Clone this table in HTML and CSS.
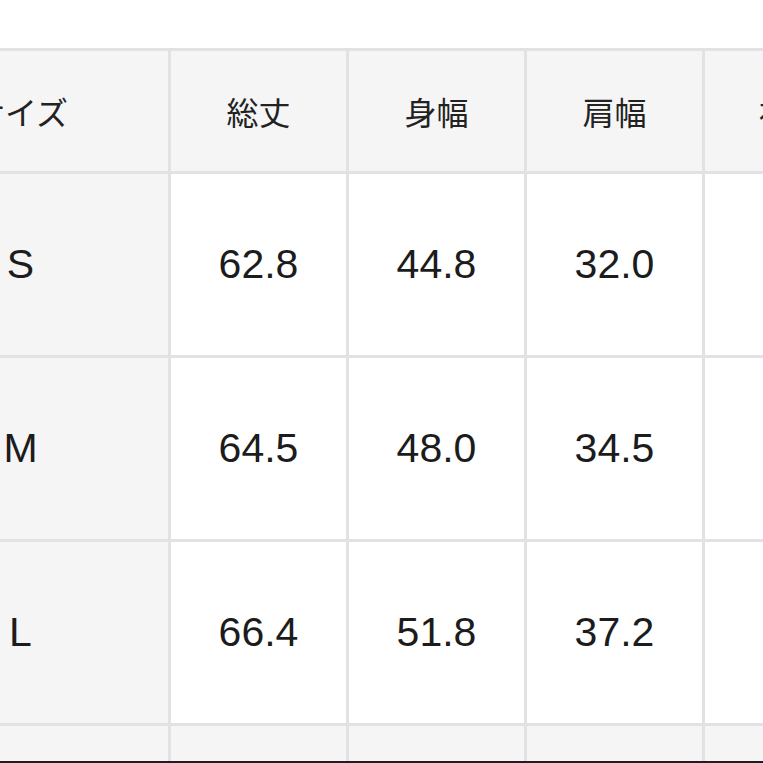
FILE: index.html
```html
<!DOCTYPE html>
<html lang="ja">
<head>
<meta charset="utf-8">
<title>サイズ表</title>
<link rel="stylesheet" href="styles.css">
</head>
<body>
<div class="frame">
  <div class="size-table">
    <div class="cell head">サイズ</div>
    <div class="cell head">総丈</div>
    <div class="cell head">身幅</div>
    <div class="cell head">肩幅</div>
    <div class="cell head">袖口幅</div>

    <div class="cell label">S</div>
    <div class="cell num">62.8</div>
    <div class="cell num">44.8</div>
    <div class="cell num">32.0</div>
    <div class="cell num">58.5</div>

    <div class="cell label">M</div>
    <div class="cell num">64.5</div>
    <div class="cell num">48.0</div>
    <div class="cell num">34.5</div>
    <div class="cell num">60.0</div>

    <div class="cell label">L</div>
    <div class="cell num">66.4</div>
    <div class="cell num">51.8</div>
    <div class="cell num">37.2</div>
    <div class="cell num">61.5</div>

    <div class="cell foot"></div>
    <div class="cell foot"></div>
    <div class="cell foot"></div>
    <div class="cell foot"></div>
    <div class="cell foot"></div>
  </div>
</div>
<div class="edge"></div>
</body>
</html>
```

FILE: styles.css
```css
html, body {
  margin: 0;
  padding: 0;
  background: #ffffff;
}

body {
  width: 763px;
  height: 763px;
  overflow: hidden;
  font-family: "Liberation Sans", "Noto Sans CJK JP", sans-serif;
  color: #1f1f1f;
}

.frame {
  height: 761px;
  overflow: hidden;
}

.size-table {
  display: grid;
  grid-template-columns: 295px 175px 175px 175px 204px;
  grid-template-rows: 120px 181px 181px 181px 181px;
  gap: 3px;
  padding-top: 3px;
  margin-top: 48px;
  margin-left: -127px;
  width: max-content;
  background: #e1e2e4;
}

.cell {
  display: flex;
  align-items: center;
  justify-content: center;
  background: #ffffff;
}

.head {
  background: #f5f5f6;
  font-family: "Noto Sans CJK JP", "Liberation Sans", sans-serif;
  font-size: 32px;
  font-weight: 400;
  color: #222222;
}

.label {
  background: #f5f5f6;
  font-size: 41px;
  color: #1c1c1c;
}

.num {
  font-size: 41px;
  color: #1c1c1c;
}

.foot {
  background: #f5f5f6;
}

.edge {
  height: 2px;
  background: #1e1e1e;
}
```
